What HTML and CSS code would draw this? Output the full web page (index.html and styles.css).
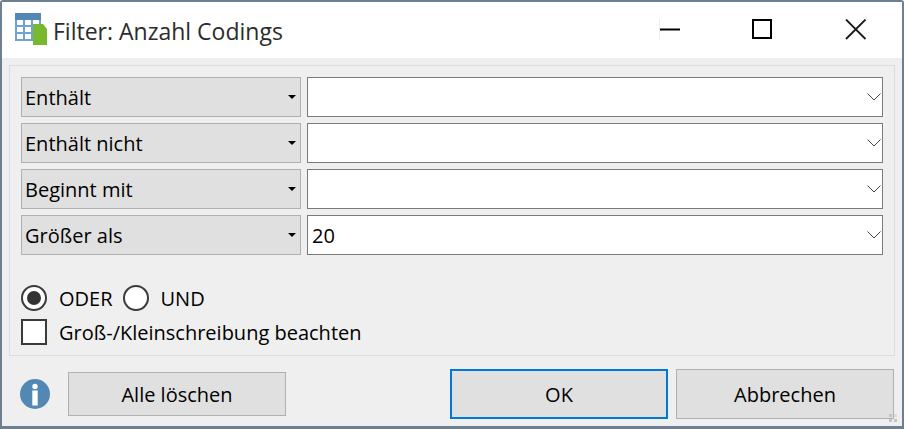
FILE: index.html
```html
<!DOCTYPE html>
<html lang="de">
<head>
<meta charset="utf-8">
<title>Filter: Anzahl Codings</title>
<link rel="stylesheet" href="styles.css">
</head>
<body>
<div class="window">
  <header class="titlebar">
    <svg class="app-icon" width="32" height="32" viewBox="0 0 32 32">
      <rect x="0" y="0" width="26" height="28" fill="#6fa4d2"/>
      <rect x="0" y="0" width="26" height="7" fill="#5488b4"/>
      <path d="M2 7h6v5H2zM10 7h6v5h-6zM18 7h6v5h-6zM2 14h6v5H2zM10 14h6v5h-6zM18 14h6v5h-6zM2 21h6v5H2zM10 21h6v5h-6zM18 21h6v5h-6z" fill="#fff"/>
      <path d="M18 11H28L32 16V32H18z" fill="#77b82e"/>
    </svg>
    <span class="title">Filter: Anzahl Codings</span>
    <div class="win-controls">
      <svg class="win-btn" width="22" height="22" viewBox="0 0 22 22"><path d="M0.500 0V21" stroke="#eee" stroke-width="1"/><path d="M1 10.500H21" stroke="#000" stroke-width="2"/></svg>
      <svg class="win-btn" width="22" height="22" viewBox="0 0 22 22"><rect x="2" y="1" width="18" height="18" fill="none" stroke="#000" stroke-width="2"/></svg>
      <svg class="win-btn win-close" width="22" height="22" viewBox="0 0 22 22"><path d="M1 0.500L20.500 20M20.500 0.500L1 20" stroke="#1a1a1a" stroke-width="1.800" fill="none"/></svg>
    </div>
  </header>
  <main class="content">
    <section class="group">
      <div class="rows">
        <div class="row">
          <div class="mode"><span>Enthält</span><i class="caret"></i></div>
          <div class="value"><span></span><svg class="chev" width="14" height="8" viewBox="0 0 14 8"><path d="M0.500 0.500L7 7L13.500 0.500" fill="none" stroke="#444" stroke-width="1"/></svg></div>
        </div>
        <div class="row">
          <div class="mode"><span>Enthält nicht</span><i class="caret"></i></div>
          <div class="value"><span></span><svg class="chev" width="14" height="8" viewBox="0 0 14 8"><path d="M0.500 0.500L7 7L13.500 0.500" fill="none" stroke="#444" stroke-width="1"/></svg></div>
        </div>
        <div class="row">
          <div class="mode"><span>Beginnt mit</span><i class="caret"></i></div>
          <div class="value"><span></span><svg class="chev" width="14" height="8" viewBox="0 0 14 8"><path d="M0.500 0.500L7 7L13.500 0.500" fill="none" stroke="#444" stroke-width="1"/></svg></div>
        </div>
        <div class="row">
          <div class="mode"><span>Größer als</span><i class="caret"></i></div>
          <div class="value"><span>20</span><svg class="chev" width="14" height="8" viewBox="0 0 14 8"><path d="M0.500 0.500L7 7L13.500 0.500" fill="none" stroke="#444" stroke-width="1"/></svg></div>
        </div>
      </div>
      <div class="options">
        <div class="radios">
          <span class="radio checked"></span><span class="opt-label">ODER</span>
          <span class="radio"></span><span class="opt-label">UND</span>
        </div>
        <div class="check-row">
          <span class="checkbox"></span><span class="opt-label">Groß-/Kleinschreibung beachten</span>
        </div>
      </div>
    </section>
    <footer class="footer">
      <svg class="info" width="30" height="30" viewBox="0 0 30 30">
        <circle cx="15" cy="15" r="15" fill="#5488b4"/>
        <circle cx="15" cy="7.500" r="2.700" fill="#fff"/>
        <rect x="12.300" y="11.500" width="5.400" height="15" fill="#fff"/>
      </svg>
      <div class="btn btn-clear">Alle löschen</div>
      <div class="spacer"></div>
      <div class="btn btn-ok">OK</div>
      <div class="btn btn-cancel">Abbrechen</div>
    </footer>
    <svg class="grip" width="8" height="8" viewBox="0 0 8 8"><path d="M0 0h3v3H0zM0 5h3v3H0zM5 5h3v3H5z" fill="#c4c4c4"/><path d="M5 0h3v3H5z" fill="#dcdcdc"/></svg>
  </main>
</div>
</body>
</html>
```
FILE: styles.css
```css
* { box-sizing: border-box; }
html, body { margin: 0; padding: 0; background: #fff; }
body {
  width: 904px;
  height: 429px;
  overflow: hidden;
  font-family: "Open Sans", "Noto Sans", "Liberation Sans", sans-serif;
  font-size: 20px;
  color: #000;
}
.window {
  width: 904px;
  height: 429px;
  border-style: solid;
  border-color: #6f7f92;
  border-width: 2px 2px 3px 2px;
  border-radius: 3px 3px 0 0;
  display: flex;
  flex-direction: column;
  background: #efefef;
  position: relative;
}
.titlebar {
  height: 56px;
  background: #fff;
  display: flex;
  align-items: flex-start;
  flex: none;
}
.app-icon { margin: 11px 0 0 13px; flex: none; }
.title {
  margin: 15px 0 0 6px;
  font-size: 23px;
  line-height: 28px;
  color: #2c2c2c;
}
.win-controls {
  margin-left: auto;
  display: flex;
  gap: 70px;
  padding: 17px 35px 0 0;
}
.win-btn { display: block; }
.win-close { margin-left: 2px; }
.content {
  flex: 1;
  display: flex;
  flex-direction: column;
  padding: 7px 7px 0 7px;
  position: relative;
}
.group {
  height: 291px;
  border: 1px solid #dcdcdc;
  padding: 11px 11px 0 11px;
}
.rows { display: flex; flex-direction: column; gap: 6px; }
.row { display: flex; gap: 6px; height: 40px; }
.mode {
  width: 280px;
  background: #e0e0e0;
  border: 1px solid #b0b0b0;
  display: flex;
  align-items: center;
  justify-content: space-between;
  padding: 0 4px 0 3px;
}
.caret {
  width: 0;
  height: 0;
  border-left: 4px solid transparent;
  border-right: 4px solid transparent;
  border-top: 4px solid #000;
}
.value {
  flex: 1;
  background: #fff;
  border: 1px solid #7a7a7a;
  display: flex;
  align-items: center;
  justify-content: space-between;
  padding: 0 0 0 4px;
}
.chev { margin-right: 1px; }
.options { padding-top: 30px; display: flex; flex-direction: column; gap: 8px; }
.radios, .check-row { display: flex; align-items: center; height: 26px; }
.radio {
  width: 26px;
  height: 26px;
  border: 2px solid #3a3a3a;
  border-radius: 50%;
  background: #fff;
  display: flex;
  align-items: center;
  justify-content: center;
  flex: none;
}
.radio.checked::after {
  content: "";
  width: 14px;
  height: 14px;
  border-radius: 50%;
  background: #333;
}
.checkbox {
  width: 26px;
  height: 26px;
  border: 2px solid #3a3a3a;
  background: #fff;
  flex: none;
}
.opt-label { margin: 0 10px 0 12px; }
.footer {
  flex: 1;
  display: flex;
  align-items: center;
  padding: 6px 1px 0 0;
  position: relative;
}
.info {
  margin-left: 11px;
  display: block;
  flex: none;
}
.btn {
  width: 218px;
  background: #e0e0e0;
  border: 1px solid #b0b0b0;
  display: flex;
  align-items: center;
  justify-content: center;
  flex: none;
}
.btn-clear { height: 44px; margin-left: 18px; }
.spacer { flex: 1; }
.btn-ok { height: 50px; border: 2px solid #0078d7; margin-right: 8px; }
.btn-cancel { height: 50px; }
.grip { position: absolute; right: 5px; bottom: 4px; }
```
